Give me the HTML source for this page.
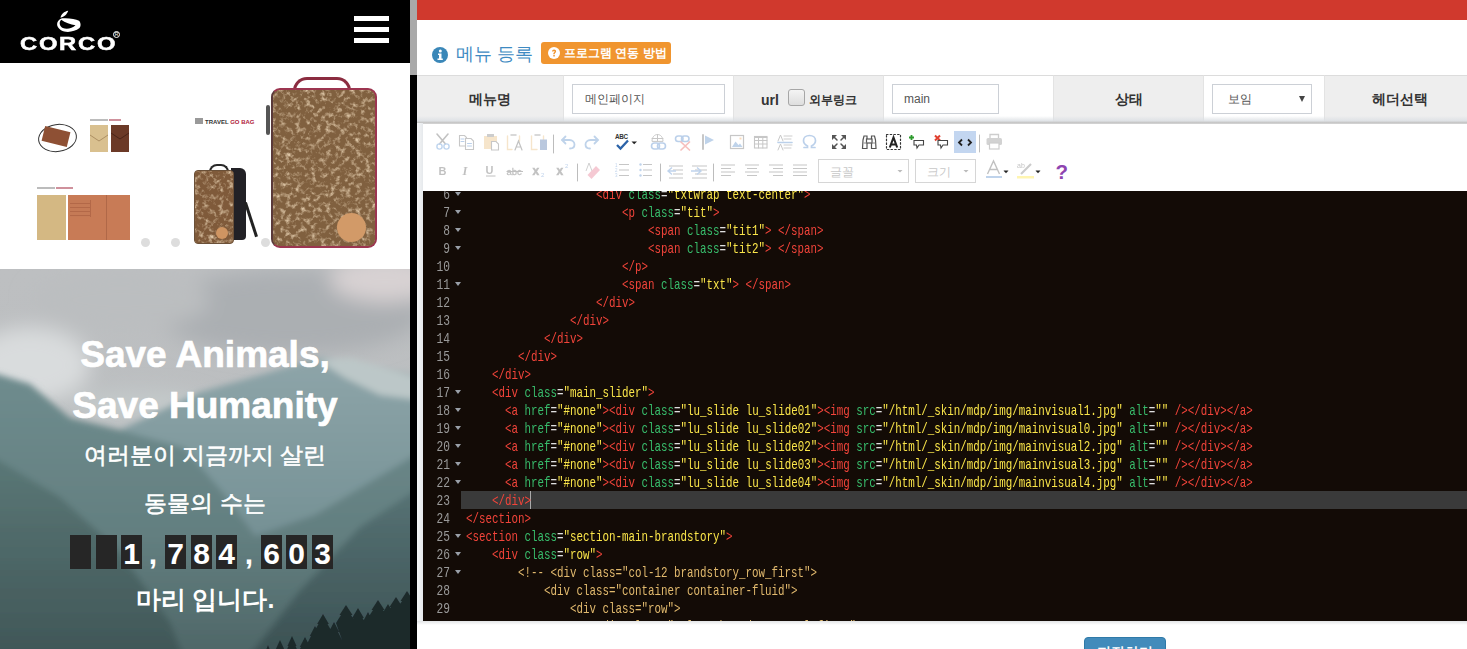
<!DOCTYPE html>
<html><head><meta charset="utf-8">
<style>
*{box-sizing:border-box;margin:0;padding:0}
html,body{width:1467px;height:649px;overflow:hidden;background:#fff}
body{position:relative;font-family:"Liberation Sans",sans-serif}
.a{position:absolute}
/* left panel */
#left{left:0;top:0;width:410px;height:649px;overflow:hidden;background:#fff}
#hdr{left:0;top:0;width:410px;height:63px;background:#000}
.hb{left:354px;width:35px;height:5px;background:#fff}
#slider{left:0;top:63px;width:410px;height:206px;background:#fff;overflow:hidden}
#mtn{left:0;top:269px;width:410px;height:380px;overflow:hidden}
.cnt{top:266px;width:21px;height:34px;background:#262626;color:#fff;font-size:30px;font-weight:bold;text-align:center;line-height:37px;overflow:hidden}
.cm{top:266px;width:12px;height:40px;color:#fff;font-size:30px;font-weight:bold;text-align:center;line-height:37px}
.dot{top:175px;width:9px;height:9px;border-radius:50%;background:#ddd}
/* scrollbar */
#sb{left:410px;top:0;width:7px;height:649px;background:#000}
#sbt{left:410px;top:0;width:7px;height:75px;background:#a9a9a9}
/* right */
#right{left:417px;top:0;width:1050px;height:649px;background:#fff;overflow:hidden}
#red{left:0;top:0;width:1050px;height:20px;background:#d0392d}
.th{top:75px;height:48px;background:#eeeeee;border-top:1px solid #dcdcdc;font-weight:bold;font-size:14px;color:#333;text-align:center;line-height:46px}
.td{top:75px;height:48px;background:#fff;border-top:1px solid #dcdcdc}
.inp{top:84px;height:30px;border:1px solid #ccd0d6;background:#fff;font-size:12px;color:#555;line-height:28px}
#rowshadow{left:0;top:116px;width:1050px;height:8px;background:linear-gradient(rgba(220,224,228,0) 0,rgba(220,224,228,.9) 5px,#cdcdcd 6px,#c2c2c2 7px,#dedede 8px)}
#editor{left:5px;top:123px;width:1100px;height:498px;border:1px solid #d1d1d1;background:#fff}
#code{left:6px;top:191px;width:1100px;height:430px;background:#130b06;overflow:hidden}
.ln{position:absolute;left:0;margin-top:1.5px;width:27px;line-height:18px;transform:scaleX(.75);transform-origin:27px 0;text-align:right;font-family:"Liberation Mono",monospace;font-size:15px;color:#9a9a9a}
.cl{position:absolute;left:42.5px;margin-top:1.5px;transform:scaleX(.7222);transform-origin:0 0;white-space:pre;font-family:"Liberation Mono",monospace;font-size:15px;line-height:18px;color:#d8d8d8}
.fd{position:absolute;left:32px;width:0;height:0;margin-top:7px;border-left:3px solid transparent;border-right:3px solid transparent;border-top:4px solid #9aa0a8}
.t{color:#f2443a}.at{color:#38bd6c}.s{color:#fbe64a}.c{color:#e2ba6e}.e{color:#e0e0e0}
</style></head><body>

<div id="left" class="a">
  <div id="hdr" class="a">
    <div class="a hb" style="top:16px"></div>
    <div class="a hb" style="top:27px"></div>
    <div class="a hb" style="top:38px"></div>
    <div class="a" style="left:20px;top:33px;font-size:19px;font-weight:bold;color:#fff;letter-spacing:1.4px;line-height:21px;transform:scaleX(1.25);transform-origin:0 0;-webkit-text-stroke:0.5px #fff">CORCO</div>
    <div class="a" style="left:113px;top:31px;width:7px;height:7px;border:1px solid #fff;border-radius:50%;font-size:5px;color:#fff;line-height:5px;text-align:center">R</div>
    <svg class="a" style="left:50px;top:6px" width="40" height="30" viewBox="0 0 40 30">
      <path d="M10.5 11.8 C11 8.2 14 5.5 18.2 4.8 C17.2 8 14.2 11 10.5 11.8 Z" fill="#fff"/>
      <path d="M12 12.3 C19 11.8 25.5 13 29 14.8 C31 16.5 31 20.5 29.5 22 C24.5 26 16 27.2 11 24.2 C5.8 21 5.5 14.8 12 12.3 Z M11.2 13.8 C8.8 16 9.3 20.2 12.8 22 C17 23.8 22.3 22.3 25.5 19.2 C20.5 18.6 15 16.8 11.2 13.8 Z" fill="#fff" fill-rule="evenodd"/>
    </svg>
  </div>
  <div id="slider" class="a">
    <!-- necklace wallet -->
    <div class="a" style="left:38px;top:61px;width:39px;height:28px;border:1px solid #333;border-radius:50%;transform:rotate(-8deg)"></div>
    <div class="a" style="left:43px;top:66px;width:26px;height:15px;background:#8e5034;transform:rotate(14deg)"></div>
    <div class="a" style="left:90px;top:56px;width:18px;height:2px;background:#6a6a6a;opacity:.45"></div><div class="a" style="left:109px;top:56px;width:12px;height:2px;background:#a8364a;opacity:.55"></div>
    <div class="a" style="left:90px;top:62px;width:18px;height:27px;background:#d9c08f"></div>
    
    <div class="a" style="left:111px;top:62px;width:18px;height:27px;background:#6c3a27"></div><svg class="a" style="left:90px;top:62px" width="39" height="27"><path d="M0 10 L9 16 L18 10" stroke="#9a7a50" stroke-width="1" fill="none" opacity=".7"/><path d="M21 8 L30 14 L39 8" stroke="#4a2418" stroke-width="1" fill="none"/></svg>
    <!-- passport -->
    <div class="a" style="left:37px;top:124px;width:18px;height:2px;background:#6a6a6a;opacity:.45"></div><div class="a" style="left:56px;top:124px;width:17px;height:2px;background:#a8364a;opacity:.55"></div>
    <div class="a" style="left:37px;top:132px;width:29px;height:45px;background:#d4b883"></div>
    <div class="a" style="left:68px;top:132px;width:62px;height:45px;background:#c87b56"></div>
    <div class="a" style="left:70px;top:137px;width:21px;height:17px;background:repeating-linear-gradient(#c57a56 0 3px,#b36848 3px 4px);border-right:1px solid #b36848"></div>
    <div class="a" style="left:106px;top:132px;width:1px;height:45px;background:#b06848"></div>
    <!-- travel go bag text -->
    <div class="a" style="left:195px;top:55px;width:8px;height:6px;background:#555;opacity:.6"></div>
    <div class="a" style="left:205px;top:56px;font-size:6px;font-weight:bold;line-height:6px;color:#333">TRAVEL <span style="color:#b0203a">GO BAG</span></div>
    <!-- small bag -->
    <div class="a" style="left:231px;top:105px;width:15px;height:72px;background:#222126;border-radius:0 6px 4px 0"></div><div class="a" style="left:244px;top:140px;width:3px;height:36px;background:#222;transform:rotate(-18deg);transform-origin:0 0"></div>
    <div class="a" style="left:209px;top:101px;width:20px;height:8px;border:2px solid #2a2a2a;border-bottom:none;border-radius:8px 8px 0 0"></div>
    <div class="a" style="left:194px;top:107px;width:40px;height:74px;background:#95704a;border-radius:4px;border:1px solid #6a5038;overflow:hidden"><svg width="40" height="74" style="position:absolute;left:-1px;top:-1px"><rect width="40" height="74" fill="#7f5a3a"/><rect width="40" height="74" filter="url(#cork)" fill="#000"/></svg></div>
    <div class="a" style="left:216px;top:164px;width:12px;height:12px;background:#cf9562;border-radius:50%"></div>
    <!-- big bag -->
    <div class="a" style="left:293px;top:14px;width:58px;height:20px;border:3px solid #8b2c40;border-bottom:none;border-radius:14px 14px 0 0"></div>
    <div class="a" style="left:271px;top:25px;width:106px;height:160px;background:#96704a;border-radius:9px;border:2px solid #9c3550;border-left-color:#5a3a3a;overflow:hidden"><svg width="106" height="160" style="position:absolute;left:-2px;top:-2px"><filter id="cork" x="0" y="0" width="100%" height="100%"><feTurbulence type="fractalNoise" baseFrequency="0.2" numOctaves="3" seed="7"/><feColorMatrix type="matrix" values="0 0 0 0 0.72  0 0 0 0 0.56  0 0 0 0 0.38  2.6 0 0 0 -1.25"/></filter><rect width="106" height="160" fill="#80603f"/><rect width="106" height="160" filter="url(#cork)" fill="#000"/></svg></div>
    <div class="a" style="left:266px;top:42px;width:4px;height:30px;background:#555;border-radius:2px"></div>
    <div class="a" style="left:337px;top:150px;width:29px;height:29px;background:#d29a68;border-radius:50%"></div>
    <!-- dots -->
    <div class="a dot" style="left:141px"></div>
    <div class="a dot" style="left:171px"></div>
    <div class="a dot" style="left:261px"></div>
  </div>
  <div id="mtn" class="a">
    <svg width="410" height="380" viewBox="0 269 410 380" style="position:absolute;left:0;top:0">
      <defs>
        <linearGradient id="sky" x1="0" y1="0" x2="0" y2="1">
          <stop offset="0" stop-color="#bdbfc1"/><stop offset="1" stop-color="#b9bdbf"/>
        </linearGradient>
        <linearGradient id="bk" x1="0" y1="0" x2="0" y2="1">
          <stop offset="0" stop-color="#8ea5a9"/><stop offset="0.4" stop-color="#7b969a"/><stop offset="1" stop-color="#5f7b7e"/>
        </linearGradient>
        <linearGradient id="mg" x1="0" y1="0" x2="0" y2="1">
          <stop offset="0" stop-color="#6f8c8e"/><stop offset="0.5" stop-color="#637f80"/><stop offset="1" stop-color="#465d5e"/>
        </linearGradient>
        <linearGradient id="fg" x1="0" y1="0" x2="0" y2="1">
          <stop offset="0" stop-color="#5b7877"/><stop offset="1" stop-color="#3a4f50"/>
        </linearGradient>
        <linearGradient id="rg" x1="0" y1="0" x2="0" y2="1">
          <stop offset="0" stop-color="#577375"/><stop offset="1" stop-color="#34484a"/>
        </linearGradient>
        <filter id="bl" x="-30%" y="-50%" width="160%" height="200%"><feGaussianBlur stdDeviation="10"/></filter>
        <filter id="bl2" x="-5%" y="-5%" width="110%" height="110%"><feGaussianBlur stdDeviation="3"/></filter>
        <filter id="bl3"><feGaussianBlur stdDeviation="0.7"/></filter>
      </defs>
      <rect x="0" y="269" width="410" height="380" fill="url(#sky)"/>
      <g filter="url(#bl)">
        <ellipse cx="290" cy="312" rx="135" ry="42" fill="#abafb2"/>
        <ellipse cx="120" cy="300" rx="90" ry="30" fill="#bbbec0"/>
        <ellipse cx="385" cy="280" rx="55" ry="22" fill="#d8d2d3"/>
        <ellipse cx="30" cy="365" rx="60" ry="38" fill="#d9dcdd"/>
        <ellipse cx="140" cy="405" rx="70" ry="14" fill="#c4cacb"/>
      </g>
      <g filter="url(#bl2)">
        <path d="M120 430 L200 392 L260 375 L321 357 L360 362 L420 376 L420 700 L120 700 Z" fill="url(#bk)"/>
        <path d="M318 360 L350 358 L420 378 L420 400 L380 395 L345 378 Z" fill="#bcc7c8"/>
        <path d="M-10 372 L30 384 L70 418 L120 430 L185 448 L225 495 L255 536 L315 515 L420 452 L420 700 L-10 700 Z" fill="url(#mg)"/>
        <path d="M-10 455 L60 497 L120 552 L170 622 L200 700 L-10 700 Z" fill="url(#fg)"/>
        <path d="M215 700 L300 590 L360 527 L420 487 L420 700 Z" fill="url(#rg)"/>
      </g>
      <path filter="url(#bl3)" d="M255 700 L262 663 L265.0 655 L264.1 655 L268 645 L271.9 655 L271.0 655 L274 663 L273 658 L276.5 650 L275.45 650 L280 640 L284.55 650 L283.5 650 L287 658 L285 654 L288.5 646 L287.45 646 L292 636 L296.55 646 L295.5 646 L299 654 L297 655 L301.0 647 L299.8 647 L305 637 L310.2 647 L309.0 647 L313 655 L307 644 L311.0 636 L309.8 636 L315 626 L320.2 636 L319.0 636 L323 644 L314 632 L318.5 624 L317.15 624 L323 614 L328.85 624 L327.5 624 L332 632 L326 640 L330.0 632 L328.8 632 L334 622 L339.2 632 L338.0 632 L342 640 L336 623 L341.0 615 L339.5 615 L346 605 L352.5 615 L351.0 615 L356 623 L349 626 L353.5 618 L352.15 618 L358 608 L363.85 618 L362.5 618 L367 626 L360 630 L364.0 622 L362.8 622 L368 612 L373.2 622 L372.0 622 L376 630 L368 618 L373.0 610 L371.5 610 L378 600 L384.5 610 L383.0 610 L388 618 L379 622 L383.5 614 L382.15 614 L388 604 L393.85 614 L392.5 614 L397 622 L386 615 L391.0 607 L389.5 607 L396 597 L402.5 607 L401.0 607 L406 615 L397 609 L402.0 601 L400.5 601 L407 591 L413.5 601 L412.0 601 L417 609 L420 600 L420 700 Z" fill="#1d292c"/>
    </svg>
    <div class="a" style="left:0;top:60px;width:410px;text-align:center;font-size:37px;font-weight:bold;color:#fff;line-height:51px;-webkit-text-stroke:0.7px #fff">Save Animals,<br>Save Humanity</div>
    <div class="a" style="left:0;top:163px;width:410px;text-align:center;font-size:23px;-webkit-text-stroke:0.6px #fff;color:#fff;line-height:47.7px">여러분이 지금까지 살린<br>동물의 수는</div>
    <div class="a" style="left:0;top:315px;width:410px;text-align:center;font-size:25px;font-weight:bold;color:#fff;line-height:30px">마리 입니다.</div>
    <div class="a cnt" style="left:70px"></div>
    <div class="a cnt" style="left:96px"></div>
    <div class="a cnt" style="left:121px">1</div>
    <div class="a cm" style="left:147px">,</div>
    <div class="a cnt" style="left:165px">7</div>
    <div class="a cnt" style="left:191px">8</div>
    <div class="a cnt" style="left:216px">4</div>
    <div class="a cm" style="left:243px">,</div>
    <div class="a cnt" style="left:261px">6</div>
    <div class="a cnt" style="left:286px">0</div>
    <div class="a cnt" style="left:312px">3</div>
  </div>
</div>

<div id="sb" class="a"></div>
<div id="sbt" class="a"></div>

<div id="right" class="a">
  <div id="red" class="a"></div>
  <!-- title -->
  <svg class="a" style="left:15px;top:47px" width="16" height="16" viewBox="0 0 16 16"><circle cx="8" cy="8" r="8" fill="#3a87b8"/><circle cx="8.3" cy="3.9" r="1.5" fill="#fff"/><path d="M6 6.5 H9.5 V11.5 H10.8 V13 H5.5 V11.5 H7 V8 H6 Z" fill="#fff"/></svg>
  <div class="a" style="left:39px;top:42px;font-size:18px;color:#3e8ac2;line-height:24px;white-space:nowrap">메뉴 등록</div>
  <div class="a" style="left:124px;top:42px;width:130px;height:22px;border-radius:3px;background:#f0952f;color:#fff;font-weight:bold;font-size:12px;line-height:22px;padding-left:23px;white-space:nowrap">프로그램 연동 방법</div>
  <svg class="a" style="left:131px;top:47px" width="12" height="12" viewBox="0 0 12 12"><circle cx="6" cy="6" r="6" fill="#fff"/><path d="M4 4.6 C4 3.3 5 2.6 6.1 2.6 C7.3 2.6 8.1 3.4 8.1 4.4 C8.1 5.5 6.8 5.8 6.8 6.9 L6.8 7.2 L5.3 7.2 L5.3 6.8 C5.3 5.4 6.6 5.2 6.6 4.5 C6.6 4.1 6.4 3.9 6 3.9 C5.6 3.9 5.4 4.2 5.4 4.6 Z" fill="#f0952f"/><rect x="5.3" y="8" width="1.5" height="1.5" fill="#f0952f"/></svg>

  <!-- table row -->
  <div class="a th" style="left:0;width:146px">메뉴명</div>
  <div class="a td" style="left:146px;width:170px;border-left:1px solid #e3e3e3"></div>
  <div class="a inp" style="left:155px;width:153px;padding-left:12px">메인페이지</div>
  <div class="a th" style="left:316px;width:150px;border-left:1px solid #e3e3e3"></div>
  <div class="a" style="left:344px;top:90px;font-size:14px;font-weight:bold;color:#333;line-height:20px">url</div>
  <div class="a" style="left:371px;top:89px;width:17px;height:17px;border:1px solid #a6a6a6;border-radius:3px;background:linear-gradient(#f4f4f4,#dedede)"></div>
  <div class="a" style="left:392px;top:90px;font-size:12px;font-weight:bold;color:#333;line-height:20px;white-space:nowrap">외부링크</div>
  <div class="a td" style="left:466px;width:170px;border-left:1px solid #e3e3e3"></div>
  <div class="a inp" style="left:475px;width:107px;padding-left:11px">main</div>
  <div class="a th" style="left:636px;width:150px;border-left:1px solid #e3e3e3">상태</div>
  <div class="a td" style="left:786px;width:121px;border-left:1px solid #e3e3e3"></div>
  <div class="a inp" style="left:795px;width:100px;padding-left:15px">보임</div>
  <div class="a" style="left:882px;top:96px;width:0;height:0;border-left:3px solid transparent;border-right:3px solid transparent;border-top:6px solid #444"></div>
  <div class="a th" style="left:907px;width:143px;border-left:1px solid #e3e3e3;padding-left:8px">헤더선택</div>
  <div id="rowshadow" class="a"></div>

  <div id="editor" class="a"></div>
  <div id="code" class="a">
<div class="a" style="left:38px;top:300px;width:1100px;height:18px;background:#3a3a3a"></div>
<div class="a" style="left:107px;top:300px;width:1px;height:18px;background:#aaa"></div>
<div class="ln" style="top:-6px">6</div>
<div class="fd" style="top:-6px"></div>
<div class="cl" style="top:-6px">                    <span class="t">&lt;div</span> <span class="at">class</span><span class="e">=</span><span class="s">&quot;txtwrap text-center&quot;</span><span class="t">&gt;</span></div>
<div class="ln" style="top:12px">7</div>
<div class="fd" style="top:12px"></div>
<div class="cl" style="top:12px">                        <span class="t">&lt;p</span> <span class="at">class</span><span class="e">=</span><span class="s">&quot;tit&quot;</span><span class="t">&gt;</span></div>
<div class="ln" style="top:30px">8</div>
<div class="fd" style="top:30px"></div>
<div class="cl" style="top:30px">                            <span class="t">&lt;span</span> <span class="at">class</span><span class="e">=</span><span class="s">&quot;tit1&quot;</span><span class="t">&gt;</span> <span class="t">&lt;/span</span><span class="t">&gt;</span></div>
<div class="ln" style="top:48px">9</div>
<div class="fd" style="top:48px"></div>
<div class="cl" style="top:48px">                            <span class="t">&lt;span</span> <span class="at">class</span><span class="e">=</span><span class="s">&quot;tit2&quot;</span><span class="t">&gt;</span> <span class="t">&lt;/span</span><span class="t">&gt;</span></div>
<div class="ln" style="top:66px">10</div>
<div class="cl" style="top:66px">                        <span class="t">&lt;/p</span><span class="t">&gt;</span></div>
<div class="ln" style="top:84px">11</div>
<div class="fd" style="top:84px"></div>
<div class="cl" style="top:84px">                        <span class="t">&lt;span</span> <span class="at">class</span><span class="e">=</span><span class="s">&quot;txt&quot;</span><span class="t">&gt;</span> <span class="t">&lt;/span</span><span class="t">&gt;</span></div>
<div class="ln" style="top:102px">12</div>
<div class="cl" style="top:102px">                    <span class="t">&lt;/div</span><span class="t">&gt;</span></div>
<div class="ln" style="top:120px">13</div>
<div class="cl" style="top:120px">                <span class="t">&lt;/div</span><span class="t">&gt;</span></div>
<div class="ln" style="top:138px">14</div>
<div class="cl" style="top:138px">            <span class="t">&lt;/div</span><span class="t">&gt;</span></div>
<div class="ln" style="top:156px">15</div>
<div class="cl" style="top:156px">        <span class="t">&lt;/div</span><span class="t">&gt;</span></div>
<div class="ln" style="top:174px">16</div>
<div class="cl" style="top:174px">    <span class="t">&lt;/div</span><span class="t">&gt;</span></div>
<div class="ln" style="top:192px">17</div>
<div class="fd" style="top:192px"></div>
<div class="cl" style="top:192px">    <span class="t">&lt;div</span> <span class="at">class</span><span class="e">=</span><span class="s">&quot;main_slider&quot;</span><span class="t">&gt;</span></div>
<div class="ln" style="top:210px">18</div>
<div class="fd" style="top:210px"></div>
<div class="cl" style="top:210px">      <span class="t">&lt;a</span> <span class="at">href</span><span class="e">=</span><span class="s">&quot;#none&quot;</span><span class="t">&gt;</span><span class="t">&lt;div</span> <span class="at">class</span><span class="e">=</span><span class="s">&quot;lu_slide lu_slide01&quot;</span><span class="t">&gt;</span><span class="t">&lt;img</span> <span class="at">src</span><span class="e">=</span><span class="s">&quot;/html/_skin/mdp/img/mainvisual1.jpg&quot;</span> <span class="at">alt</span><span class="e">=</span><span class="s">&quot;&quot;</span> <span class="t">/&gt;</span><span class="t">&lt;/div</span><span class="t">&gt;</span><span class="t">&lt;/a</span><span class="t">&gt;</span></div>
<div class="ln" style="top:228px">19</div>
<div class="fd" style="top:228px"></div>
<div class="cl" style="top:228px">      <span class="t">&lt;a</span> <span class="at">href</span><span class="e">=</span><span class="s">&quot;#none&quot;</span><span class="t">&gt;</span><span class="t">&lt;div</span> <span class="at">class</span><span class="e">=</span><span class="s">&quot;lu_slide lu_slide02&quot;</span><span class="t">&gt;</span><span class="t">&lt;img</span> <span class="at">src</span><span class="e">=</span><span class="s">&quot;/html/_skin/mdp/img/mainvisual0.jpg&quot;</span> <span class="at">alt</span><span class="e">=</span><span class="s">&quot;&quot;</span> <span class="t">/&gt;</span><span class="t">&lt;/div</span><span class="t">&gt;</span><span class="t">&lt;/a</span><span class="t">&gt;</span></div>
<div class="ln" style="top:246px">20</div>
<div class="fd" style="top:246px"></div>
<div class="cl" style="top:246px">      <span class="t">&lt;a</span> <span class="at">href</span><span class="e">=</span><span class="s">&quot;#none&quot;</span><span class="t">&gt;</span><span class="t">&lt;div</span> <span class="at">class</span><span class="e">=</span><span class="s">&quot;lu_slide lu_slide02&quot;</span><span class="t">&gt;</span><span class="t">&lt;img</span> <span class="at">src</span><span class="e">=</span><span class="s">&quot;/html/_skin/mdp/img/mainvisual2.jpg&quot;</span> <span class="at">alt</span><span class="e">=</span><span class="s">&quot;&quot;</span> <span class="t">/&gt;</span><span class="t">&lt;/div</span><span class="t">&gt;</span><span class="t">&lt;/a</span><span class="t">&gt;</span></div>
<div class="ln" style="top:264px">21</div>
<div class="fd" style="top:264px"></div>
<div class="cl" style="top:264px">      <span class="t">&lt;a</span> <span class="at">href</span><span class="e">=</span><span class="s">&quot;#none&quot;</span><span class="t">&gt;</span><span class="t">&lt;div</span> <span class="at">class</span><span class="e">=</span><span class="s">&quot;lu_slide lu_slide03&quot;</span><span class="t">&gt;</span><span class="t">&lt;img</span> <span class="at">src</span><span class="e">=</span><span class="s">&quot;/html/_skin/mdp/img/mainvisual3.jpg&quot;</span> <span class="at">alt</span><span class="e">=</span><span class="s">&quot;&quot;</span> <span class="t">/&gt;</span><span class="t">&lt;/div</span><span class="t">&gt;</span><span class="t">&lt;/a</span><span class="t">&gt;</span></div>
<div class="ln" style="top:282px">22</div>
<div class="fd" style="top:282px"></div>
<div class="cl" style="top:282px">      <span class="t">&lt;a</span> <span class="at">href</span><span class="e">=</span><span class="s">&quot;#none&quot;</span><span class="t">&gt;</span><span class="t">&lt;div</span> <span class="at">class</span><span class="e">=</span><span class="s">&quot;lu_slide lu_slide04&quot;</span><span class="t">&gt;</span><span class="t">&lt;img</span> <span class="at">src</span><span class="e">=</span><span class="s">&quot;/html/_skin/mdp/img/mainvisual4.jpg&quot;</span> <span class="at">alt</span><span class="e">=</span><span class="s">&quot;&quot;</span> <span class="t">/&gt;</span><span class="t">&lt;/div</span><span class="t">&gt;</span><span class="t">&lt;/a</span><span class="t">&gt;</span></div>
<div class="ln" style="top:300px">23</div>
<div class="cl" style="top:300px">    <span class="t">&lt;/div</span><span class="t">&gt;</span></div>
<div class="ln" style="top:318px">24</div>
<div class="cl" style="top:318px"><span class="t">&lt;/section</span><span class="t">&gt;</span></div>
<div class="ln" style="top:336px">25</div>
<div class="fd" style="top:336px"></div>
<div class="cl" style="top:336px"><span class="t">&lt;section</span> <span class="at">class</span><span class="e">=</span><span class="s">&quot;section-main-brandstory&quot;</span><span class="t">&gt;</span></div>
<div class="ln" style="top:354px">26</div>
<div class="fd" style="top:354px"></div>
<div class="cl" style="top:354px">    <span class="t">&lt;div</span> <span class="at">class</span><span class="e">=</span><span class="s">&quot;row&quot;</span><span class="t">&gt;</span></div>
<div class="ln" style="top:372px">27</div>
<div class="fd" style="top:372px"></div>
<div class="cl" style="top:372px">        <span class="c">&lt;!-- &lt;div class=&quot;col-12 brandstory_row_first&quot;&gt;</span></div>
<div class="ln" style="top:390px">28</div>
<div class="cl" style="top:390px">            <span class="c">&lt;div class=&quot;container container-fluid&quot;&gt;</span></div>
<div class="ln" style="top:408px">29</div>
<div class="cl" style="top:408px">                <span class="c">&lt;div class=&quot;row&quot;&gt;</span></div>
<div class="ln" style="top:426px">30</div>
<div class="cl" style="top:426px">                    <span class="c">&lt;div class=&quot;col-12 brandstory_col_first&quot;&gt;</span></div>
</div>

  <div class="a" style="left:667px;top:637px;width:82px;height:34px;border-radius:4px;background:#428bbb;border:1px solid #2f7aa8;color:#fff;font-size:14px;font-weight:bold;text-align:center;line-height:28px;white-space:nowrap">저장하기</div>
  <div class="a" style="left:0;top:123px;width:6px;height:498px;background:linear-gradient(to right,#f6f7f8,#e6e9ec)"></div>
  <div class="a" style="left:0;top:621px;width:1050px;height:4px;background:linear-gradient(#e2e4e6,#fff)"></div>
</div>

<svg class="a" style="left:422px;top:123px" width="1045" height="68" viewBox="422 123 1045 68">
<g fill="none" stroke-linecap="round">
 <!-- disabled group row1 -->
 <g opacity="0.32">
  <!-- scissors -->
  <path d="M437 134 L445.5 144 M448 134 L439.5 144" stroke="#444" stroke-width="1.6"/>
  <circle cx="439.5" cy="146.5" r="2.6" stroke="#3b7fd0" stroke-width="1.4"/>
  <circle cx="446.5" cy="146.5" r="2.6" stroke="#3b7fd0" stroke-width="1.4"/>
  <!-- copy -->
  <path d="M459.5 135.5 H464.5 L466.5 137.5 V146 H459.5 Z" stroke="#555" stroke-width="1.1"/>
  <path d="M465.5 138.5 H471 L473.5 141 V149.5 H465.5 Z" fill="#fff" stroke="#555" stroke-width="1.1"/>
  <path d="M461 139 H464 M461 141.5 H464 M467.5 143.5 H471.5 M467.5 146 H471.5" stroke="#2f6fc0" stroke-width="1"/>
  <!-- paste -->
  <rect x="484" y="136" width="13" height="13" fill="#e6b061" stroke="none"/>
  <rect x="487" y="134" width="7" height="3" fill="#666" stroke="none"/>
  <path d="M491.5 141.5 H496 L498.5 144 V150 H491.5 Z" fill="#fff" stroke="#555" stroke-width="1.1"/>
  <!-- paste text -->
  <path d="M507.5 136 V149.5 H512 M519.5 136 V141" stroke="#e6b061" stroke-width="1.4"/>
  <path d="M511 135 H516" stroke="#666" stroke-width="1.5"/>
  <path d="M515 150 L518.5 141 L522 150 M516.2 147 H520.8" stroke="#444" stroke-width="1.2"/>
  <!-- paste word -->
  <path d="M531.5 136 V149.5 H537 M543.5 136 V140" stroke="#e6b061" stroke-width="1.4"/>
  <path d="M535 135 H540" stroke="#666" stroke-width="1.5"/>
  <rect x="540" y="139.5" width="7" height="10.5" fill="#2b579a" stroke="none"/>
  <!-- undo redo -->
  <path d="M562.5 140 H569.5 C572.5 140 574.5 142 574.5 144.5 C574.5 147 572.5 148.5 570 148.5" stroke="#3a78c0" stroke-width="1.8"/>
  <path d="M565.5 136.5 L562 140 L565.5 143.5" stroke="#3a78c0" stroke-width="1.8"/>
  <path d="M597.5 140 H590.5 C587.5 140 585.5 142 585.5 144.5 C585.5 147 587.5 148.5 590 148.5" stroke="#3a78c0" stroke-width="1.8"/>
  <path d="M594.5 136.5 L598 140 L594.5 143.5" stroke="#3a78c0" stroke-width="1.8"/>
  <!-- link -->
  <path d="M652 141 C652 137 654.5 134.5 657.5 134.5 C660.5 134.5 663 137 663 141 Z M652 138.5 H663 M657.5 134.5 V141" stroke="#555" stroke-width="1"/>
  <rect x="651.5" y="143" width="8" height="6" rx="3" stroke="#2f6fc0" stroke-width="1.6"/>
  <rect x="657.5" y="143" width="8" height="6" rx="3" stroke="#2f6fc0" stroke-width="1.6"/>
  <!-- unlink -->
  <rect x="675.5" y="136" width="7.5" height="5.5" rx="2.7" stroke="#2f6fc0" stroke-width="1.6"/>
  <rect x="681.5" y="136" width="7.5" height="5.5" rx="2.7" stroke="#2f6fc0" stroke-width="1.6"/>
  <path d="M681 142 L689.5 150 M689.5 142 L681 150" stroke="#e53935" stroke-width="1.7"/>
  <!-- anchor -->
  <path d="M703 135 V149" stroke="#555" stroke-width="2"/>
  <path d="M705 135.5 L714 140 L705 144.5 Z" fill="#3a78c0" stroke="none"/>
  <!-- image -->
  <rect x="730.5" y="135.5" width="13" height="13" stroke="#555" stroke-width="1.2"/>
  <path d="M732 147 L735.5 141.5 L738.5 145 L740 143.5 L742.5 147 Z" fill="#3a78c0" stroke="none"/>
  <rect x="739.5" y="137.5" width="2" height="2" fill="#f09030" stroke="none"/>
  <!-- table -->
  <rect x="754.5" y="136.5" width="12.5" height="11.5" stroke="#555" stroke-width="1.1"/>
  <path d="M754.5 137.5 H767 M754.5 140.5 H767 M754.5 144 H767 M758.5 138 V148 M762.8 138 V148" stroke="#555" stroke-width="1"/>
  <!-- hr -->
  <path d="M778 141 L780.5 135 L783 141 M778 150 L780.5 144 L783 150" stroke="#555" stroke-width="1"/>
  <path d="M784 136 H792 M784 139 H791 M784 145 H792 M784 148 H791" stroke="#555" stroke-width="0.9"/>
  <path d="M778 142.5 H792" stroke="#2f6fc0" stroke-width="1.6"/>
  <!-- omega -->
  <path d="M804 147.5 H807.5 V146 C804.5 144.5 803.5 142.5 803.5 140.5 C803.5 137.5 806 135.5 809.5 135.5 C813 135.5 815.5 137.5 815.5 140.5 C815.5 142.5 814.5 144.5 811.5 146 V147.5 H815" stroke="#2f6fc0" stroke-width="1.7"/>
  <!-- print -->
  <path d="M990 138 V134.5 H998.5 V138" stroke="#666" stroke-width="1.3"/>
  <rect x="986.5" y="138" width="15.5" height="7" rx="1.5" fill="#777" stroke="none"/>
  <rect x="989.5" y="143" width="9.5" height="6" fill="#fff" stroke="#666" stroke-width="1.2"/>
 </g>
 <!-- enabled row1 -->
 <!-- spellcheck -->
 <text x="615" y="139" font-family="Liberation Sans" font-size="6.3" font-weight="bold" fill="#333" stroke="none" textLength="13">ABC</text>
 <path d="M617 145 L620.5 148.5 L628 140.5" stroke="#2c63a8" stroke-width="2.3" stroke-linecap="butt"/>
 <path d="M631.5 141.5 H637 L634.2 144.2 Z" fill="#222" stroke="none"/>
 <!-- maximize -->
 <g stroke="#555" stroke-width="1.5">
  <path d="M833.5 136.5 L837 140 M844.5 136.5 L841 140 M833.5 147.5 L837 144 M844.5 147.5 L841 144"/>
 </g>
 <g fill="#555" stroke="none">
  <path d="M832 135 H837 L832 140 Z M846 135 H841 L846 140 Z M832 149 H837 L832 144 Z M846 149 H841 L846 144 Z"/>
 </g>
 <!-- find binoculars -->
 <g stroke="#555" stroke-width="1.2" fill="#fff">
  <path d="M863 140 L864 136 H867 V148.5 H862.5 Z"/>
  <path d="M875.5 140 L874.5 136 H871.5 V148.5 H876 Z"/>
  <rect x="866.5" y="139" width="5.5" height="4"/>
 </g>
 <path d="M864 143 H866.5 M872 143 H875" stroke="#888" stroke-width="1"/>
 <!-- select all -->
 <rect x="886.5" y="134.5" width="14" height="15" stroke="#333" stroke-width="1.2" stroke-dasharray="1.5 2.2"/>
 <path d="M889.8 147.5 L893.5 137.5 L897.2 147.5 M891.2 144.5 H895.8" stroke="#222" stroke-width="2.1" stroke-linecap="butt"/>
 <!-- add comment -->
 <path d="M911.5 135 V140 M909 137.5 H914" stroke="#2c9a2c" stroke-width="1.8" stroke-linecap="butt"/>
 <path d="M914 140.5 H923.5 V145 H919 L917 148 L916.5 145 H914 Z" stroke="#444" stroke-width="1.1" fill="#fff"/>
 <!-- remove comment -->
 <path d="M935 135.5 L940 140.5 M940 135.5 L935 140.5" stroke="#e04030" stroke-width="2" stroke-linecap="butt"/>
 <path d="M938 140.5 H947.5 V145 H943 L941 148 L940.5 145 H938 Z" stroke="#444" stroke-width="1.1" fill="#fff"/>
 <!-- source active -->
 <rect x="954" y="131" width="22" height="22" fill="#c3d6f0" stroke="none"/>
 <path d="M962 139.5 L959 142.5 L962 145.5 M968 139.5 L971 142.5 L968 145.5" stroke="#222" stroke-width="1.8" stroke-linecap="butt"/>
 <!-- separators -->
 <path d="M553.5 135 V153 M979.5 135 V152" stroke="#bcbcbc" stroke-width="1"/>
 <path d="M577.5 164 V181 M660.5 164 V181 M713.5 164 V181" stroke="#bcbcbc" stroke-width="1"/>
</g>
<!-- row 2 disabled -->
<g opacity="0.3" stroke-linecap="butt">
 <text x="438.5" y="175" font-family="Liberation Sans" font-size="11" font-weight="bold" fill="#333">B</text>
 <text x="462.5" y="175" font-family="Liberation Serif" font-size="12.5" font-style="italic" font-weight="bold" fill="#333">I</text>
 <text x="485.5" y="174" font-family="Liberation Sans" font-size="11" font-weight="bold" fill="#333">U</text>
 <path d="M486 176 H495.5" stroke="#333" stroke-width="1"/>
 <text x="506.5" y="175" font-family="Liberation Sans" font-size="9.5" fill="#333" stroke="#333" stroke-width="0.3">abc</text>
 <path d="M506.5 171.5 H523" stroke="#333" stroke-width="1"/>
 <text x="532.5" y="174.5" font-family="Liberation Sans" font-size="12" font-weight="bold" fill="#333" stroke="#333" stroke-width="0.5">x</text>
 <text x="541" y="177" font-family="Liberation Sans" font-size="6" fill="#2f6fc0">2</text>
 <text x="556.5" y="174.5" font-family="Liberation Sans" font-size="12" font-weight="bold" fill="#333" stroke="#333" stroke-width="0.5">x</text>
 <text x="565" y="168" font-family="Liberation Sans" font-size="6" fill="#2f6fc0">2</text>
 <!-- remove format -->
 <path d="M586 171 L589 163 L592 171" stroke="#555" stroke-width="0.9" fill="none"/>
 <path d="M587.5 175 L596 166 L600 170 L591.5 179 Z" fill="#e05070"/>
 <!-- numbered list -->
 <text x="615" y="167" font-family="Liberation Sans" font-size="4.5" fill="#2f6fc0">1</text>
 <text x="615" y="172" font-family="Liberation Sans" font-size="4.5" fill="#2f6fc0">2</text>
 <text x="615" y="177" font-family="Liberation Sans" font-size="4.5" fill="#2f6fc0">3</text>
 <path d="M619 164.5 H629 M619 170 H629 M619 175.5 H629" stroke="#444" stroke-width="1.1"/>
 <!-- bullet list -->
 <circle cx="640.5" cy="164.5" r="1.2" fill="#2f6fc0"/><circle cx="640.5" cy="170" r="1.2" fill="#2f6fc0"/><circle cx="640.5" cy="175.5" r="1.2" fill="#2f6fc0"/>
 <path d="M643 164.5 H652 M643 170 H652 M643 175.5 H652" stroke="#444" stroke-width="1.1"/>
 <!-- outdent/indent -->
 <path d="M669 166 H683 M673 170 H683 M673 174 H683 M669 178 H683" stroke="#444" stroke-width="1.1"/>
 <path d="M672 167.5 L668 171 L672 174.5 M668.5 171 H676" stroke="#2f6fc0" stroke-width="1.4" fill="none"/>
 <path d="M692 166 H707 M695 170 H707 M695 174 H707 M692 178 H707" stroke="#444" stroke-width="1.1"/>
 <path d="M697 167.5 L701 171 L697 174.5 M691 171 H700" stroke="#2f6fc0" stroke-width="1.4" fill="none"/>
 <!-- align -->
 <path d="M721 165 H735 M721 168.5 H731 M721 172 H735 M721 175.5 H731" stroke="#444" stroke-width="1.1"/>
 <path d="M745 165 H759 M747 168.5 H757 M745 172 H759 M747 175.5 H757" stroke="#444" stroke-width="1.1"/>
 <path d="M769 165 H783 M773 168.5 H783 M769 172 H783 M773 175.5 H783" stroke="#444" stroke-width="1.1"/>
 <path d="M793 165 H807 M793 168.5 H807 M793 172 H807 M793 175.5 H807" stroke="#444" stroke-width="1.1"/>
 <!-- text color -->
 <path d="M987.5 174 L993.5 161 L999.5 174 M989.5 169.5 H997.5" stroke="#333" stroke-width="1.4" fill="none"/>
 <rect x="986" y="176" width="16" height="2" fill="#2f6fc0"/>
 <path d="M1003.5 171 H1008.5 L1006 173.5 Z" fill="#111" opacity="2"/>
 <!-- bg color -->
 <text x="1017" y="168" font-family="Liberation Sans" font-size="7" fill="#333">ab</text>
 <path d="M1021 174 L1031 164" stroke="#555" stroke-width="2.2"/>
 <rect x="1017" y="176" width="17" height="2.5" fill="#ffe000"/>
 <path d="M1035.5 171 H1040.5 L1038 173.5 Z" fill="#111"/>
</g>
<!-- combos -->
<rect x="818.5" y="159.5" width="90" height="23" fill="#fff" stroke="#d6d6d6" stroke-width="1"/>
<rect x="915.5" y="159.5" width="60" height="23" fill="#fff" stroke="#d6d6d6" stroke-width="1"/>
<text x="830" y="175.5" font-family="Liberation Sans" font-size="12" fill="#c8c8c8">글꼴</text>
<text x="927" y="175.5" font-family="Liberation Sans" font-size="12" fill="#c8c8c8">크기</text>
<path d="M897.5 170 H902.5 L900 172.5 Z M963.5 170 H968.5 L966 172.5 Z" fill="#bbb"/>
<!-- dropdown arrows for colors (enabled black-ish) -->
<path d="M1003.5 170.5 H1008.5 L1006 173 Z M1035.5 170.5 H1040.5 L1038 173 Z" fill="#222"/>
<!-- help -->
<text x="1055.5" y="178.5" font-family="Liberation Sans" font-size="20.5" font-weight="bold" fill="#8e44b0">?</text>
</svg>

</body></html>
